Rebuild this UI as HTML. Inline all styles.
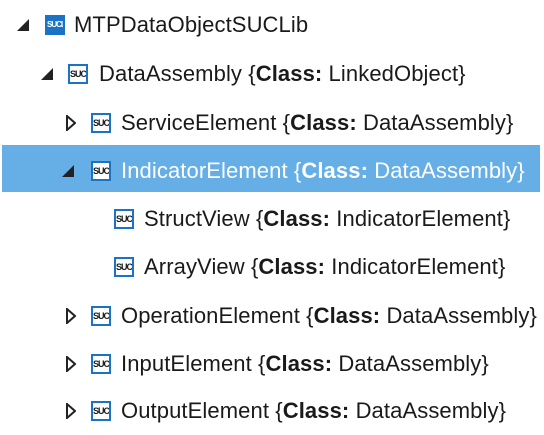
<!DOCTYPE html>
<html><head><style>
body{margin:0;width:544px;height:435px;background:#fff;position:relative;overflow:hidden;font-family:"Liberation Sans",sans-serif;font-size:22px;color:#1a1a1a}
.row{position:absolute;left:0;height:48px;width:544px}
.hl{position:absolute;left:2px;top:145px;width:538px;height:47px;background:#66aee6}
.t{position:absolute;top:50%;transform:translateY(-50%);white-space:nowrap;letter-spacing:0.1px}
.ic{position:absolute;top:50%;transform:translateY(-50%);width:16px;height:16px;border:2px solid #1a73c6;background:#fff;font-size:9px;font-weight:bold;color:#1a1a1a;text-align:center;line-height:16px;box-sizing:content-box;letter-spacing:-1px;overflow:hidden}
.tri{position:absolute;top:50%;transform:translateY(-50%)}
</style></head><body>
<div class="hl"></div>
<div class="row" style="top:1px">
<svg class="tri" style="left:17px" width="12" height="12"><polygon points="12,0 12,12 0,12" fill="#222"/></svg>
<div class="ic" style="left:45px;background:#1a73c6;color:#fff;border-color:#1a73c6;font-size:8px">SUCL</div>
<div class="t" style="left:74px">MTPDataObjectSUCLib</div></div>
<div class="row" style="top:50px">
<svg class="tri" style="left:41px" width="12" height="12"><polygon points="12,0 12,12 0,12" fill="#222"/></svg>
<div class="ic" style="left:68px">SUC</div>
<div class="t" style="left:99px">DataAssembly {<b>Class:</b> LinkedObject}</div></div>
<div class="row" style="top:99px">
<svg class="tri" style="left:66px" width="10" height="16"><polygon points="1,1 9,8 1,15" fill="none" stroke="#222" stroke-width="2"/></svg>
<div class="ic" style="left:91px">SUC</div>
<div class="t" style="left:121px">ServiceElement {<b>Class:</b> DataAssembly}</div></div>
<div class="row" style="top:147px">
<svg class="tri" style="left:62px" width="12" height="12"><polygon points="12,0 12,12 0,12" fill="#222"/></svg>
<div class="ic" style="left:91px">SUC</div>
<div class="t" style="left:121px;color:#fff">IndicatorElement {<b>Class:</b> DataAssembly}</div></div>
<div class="row" style="top:195px">
<div class="ic" style="left:114px">SUC</div>
<div class="t" style="left:144px">StructView {<b>Class:</b> IndicatorElement}</div></div>
<div class="row" style="top:243px">
<div class="ic" style="left:114px">SUC</div>
<div class="t" style="left:144px">ArrayView {<b>Class:</b> IndicatorElement}</div></div>
<div class="row" style="top:292px">
<svg class="tri" style="left:66px" width="10" height="16"><polygon points="1,1 9,8 1,15" fill="none" stroke="#222" stroke-width="2"/></svg>
<div class="ic" style="left:91px">SUC</div>
<div class="t" style="left:121px">OperationElement {<b>Class:</b> DataAssembly}</div></div>
<div class="row" style="top:340px">
<svg class="tri" style="left:66px" width="10" height="16"><polygon points="1,1 9,8 1,15" fill="none" stroke="#222" stroke-width="2"/></svg>
<div class="ic" style="left:91px">SUC</div>
<div class="t" style="left:121px">InputElement {<b>Class:</b> DataAssembly}</div></div>
<div class="row" style="top:387px">
<svg class="tri" style="left:66px" width="10" height="16"><polygon points="1,1 9,8 1,15" fill="none" stroke="#222" stroke-width="2"/></svg>
<div class="ic" style="left:91px">SUC</div>
<div class="t" style="left:121px">OutputElement {<b>Class:</b> DataAssembly}</div></div>
</body></html>
